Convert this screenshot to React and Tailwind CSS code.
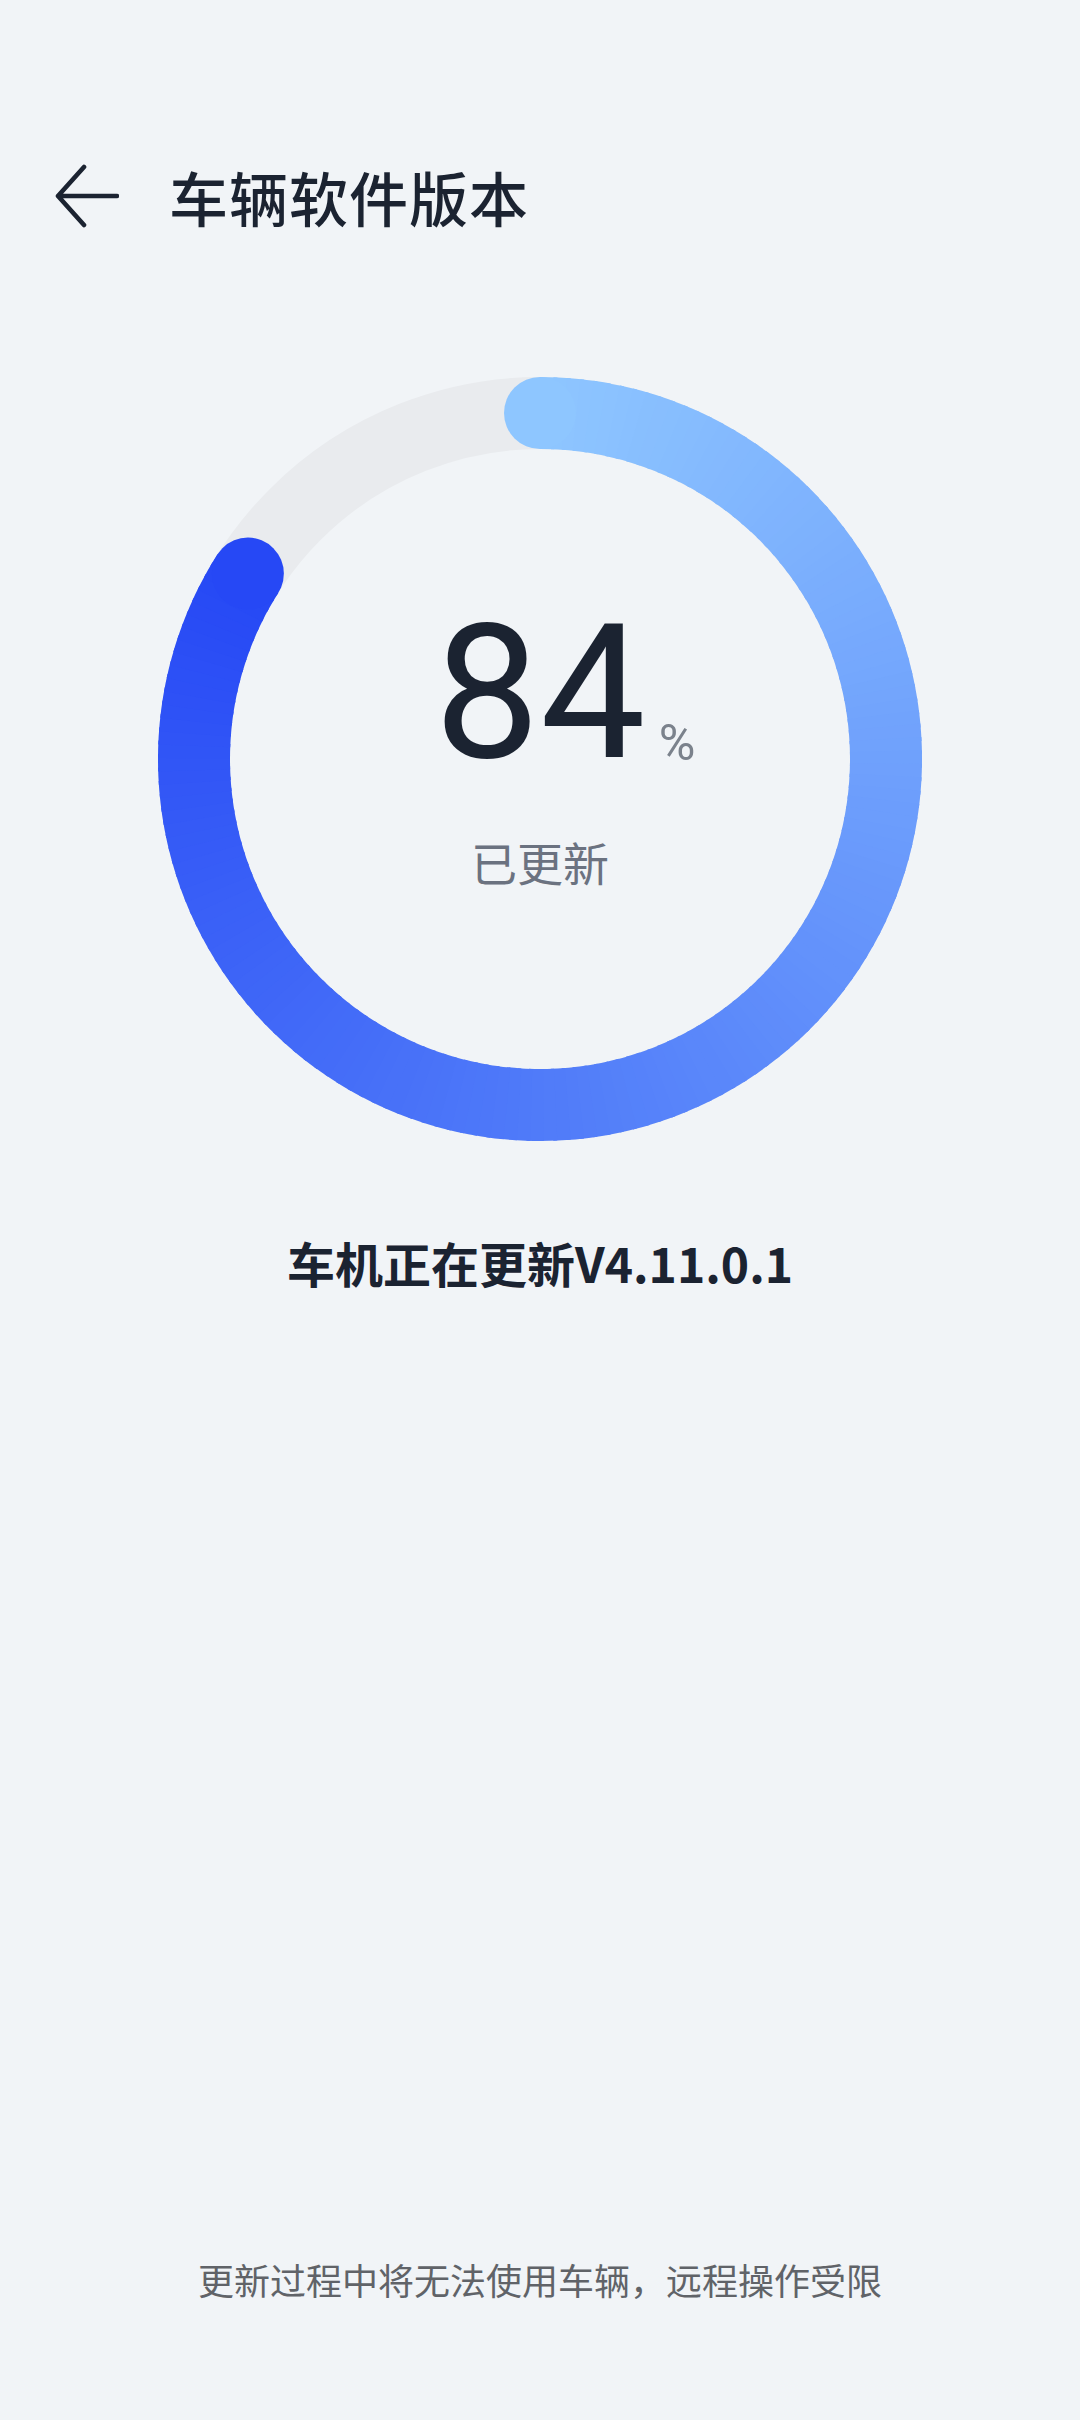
import React from "react";

const CX = 390;
const CY = 390;
const R = 346;
const STROKE = 72;
const PROGRESS = 0.84;

const START = [142, 198, 255];
const END = [38, 72, 245];

function mix(t) {
  const c = START.map((s, i) => Math.round(s + (END[i] - s) * t));
  return `rgb(${c[0]},${c[1]},${c[2]})`;
}

function point(deg) {
  const a = (deg * Math.PI) / 180;
  return [CX + R * Math.sin(a), CY - R * Math.cos(a)];
}

function ProgressRing() {
  const total = 360 * PROGRESS;
  const steps = 150;
  const segs = [];
  for (let i = 0; i < steps; i++) {
    const a1 = (total * i) / steps;
    const a2 = Math.min(total, (total * (i + 1)) / steps + 0.6);
    const [x1, y1] = point(a1);
    const [x2, y2] = point(a2);
    segs.push(
      <path
        key={i}
        d={`M ${x1} ${y1} A ${R} ${R} 0 0 1 ${x2} ${y2}`}
        stroke={mix(i / (steps - 1))}
        strokeWidth={STROKE}
        fill="none"
      />
    );
  }
  const [ex, ey] = point(total);
  const [sx, sy] = point(0);
  return (
    <svg className="absolute inset-0" width="780" height="780" viewBox="0 0 780 780">
      <circle cx={CX} cy={CY} r={R} stroke="#e9ebee" strokeWidth={STROKE} fill="none" />
      {segs}
      <circle cx={sx} cy={sy} r={STROKE / 2} fill={mix(0)} />
      <circle cx={ex} cy={ey} r={STROKE / 2} fill={mix(1)} />
    </svg>
  );
}

export default function App() {
  return (
    <div
      className="flex h-[2420px] w-full flex-col bg-[#f1f4f7] text-[#1b2331]"
      style={{ fontFamily: '"Noto Sans CJK SC", "Noto Sans", sans-serif' }}
    >
      <div className="mt-[137px] flex h-[118px] items-center">
        <svg className="ml-[55px]" width="64" height="64" viewBox="0 0 64 64" fill="none">
          <path
            d="M29 3 L3 32 L29 61 M3 32 H62"
            stroke="#1b2331"
            strokeWidth="4.6"
            strokeLinecap="round"
            strokeLinejoin="round"
          />
        </svg>
        <h1 className="ml-[50px] text-[59px] leading-none font-medium tracking-[1px]">
          车辆软件版本
        </h1>
      </div>

      <div className="relative mx-auto mt-[114px] h-[780px] w-[780px]">
        <ProgressRing />
        <div className="relative flex flex-col items-center pt-[230px]">
          <div className="relative font-['Roboto'] text-[188px] leading-[188px] font-normal">
            84
            <span className="absolute bottom-[19px] left-full ml-[13px] text-[50px] leading-none text-[#7b828c]">
              %
            </span>
          </div>
          <div className="mt-[51px] text-[46px] leading-[46px] text-[#6b7280]">已更新</div>
        </div>
      </div>

      <div className="mt-[89px] text-center text-[48px] leading-[48px] font-bold">
        车机正在更新V4.11.0.1
      </div>

      <div className="flex-1" />

      <div className="pb-[123px] text-center text-[36px] leading-[36px] text-[#606368]">
        更新过程中将无法使用车辆，远程操作受限
      </div>
    </div>
  );
}
